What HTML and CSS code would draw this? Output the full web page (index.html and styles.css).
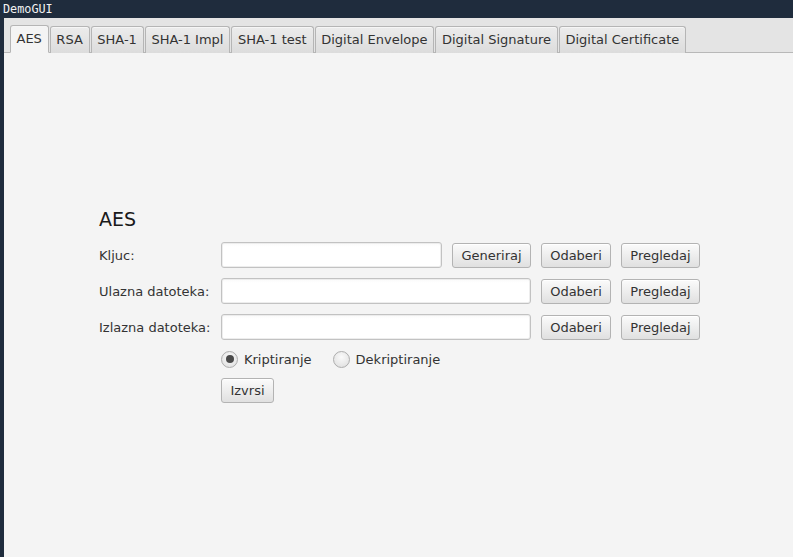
FILE: index.html
```html
<!DOCTYPE html>
<html>
<head>
<meta charset="utf-8">
<title>DemoGUI</title>
<link rel="stylesheet" href="styles.css">
</head>
<body>
<div class="titlebar">DemoGUI</div>
<div class="frame">
  <div class="tabbar">
    <div class="tab selected">AES</div>
    <div class="tab">RSA</div>
    <div class="tab">SHA-1</div>
    <div class="tab">SHA-1 Impl</div>
    <div class="tab">SHA-1 test</div>
    <div class="tab">Digital Envelope</div>
    <div class="tab">Digital Signature</div>
    <div class="tab">Digital Certificate</div>
  </div>
  <div class="content">
    <div class="form">
      <h1 class="heading">AES</h1>
      <div class="grid">
        <label class="label">Kljuc:</label>
        <input class="field short" type="text">
        <button class="btn c3">Generiraj</button>
        <button class="btn c4">Odaberi</button>
        <button class="btn c5">Pregledaj</button>

        <label class="label">Ulazna datoteka:</label>
        <input class="field long" type="text">
        <button class="btn c4">Odaberi</button>
        <button class="btn c5">Pregledaj</button>

        <label class="label">Izlazna datoteka:</label>
        <input class="field long" type="text">
        <button class="btn c4">Odaberi</button>
        <button class="btn c5">Pregledaj</button>
      </div>
      <div class="radios">
        <div class="radio"><span class="dot on"></span>Kriptiranje</div>
        <div class="radio"><span class="dot"></span>Dekriptiranje</div>
      </div>
      <div class="run">
        <button class="btn">Izvrsi</button>
      </div>
    </div>
  </div>
</div>
</body>
</html>
```

FILE: styles.css
```css
* { box-sizing: border-box; }
html, body { margin: 0; padding: 0; }
body {
  width: 793px;
  height: 557px;
  background: #1f2c3d;
  overflow: hidden;
  font-family: "DejaVu Sans", "Liberation Sans", sans-serif;
  font-size: 13px;
  color: #333333;
  display: flex;
  flex-direction: column;
}
.titlebar {
  height: 18px;
  line-height: 18px;
  padding-left: 3px;
  color: #f2f2f2;
  font-family: "DejaVu Sans Mono", monospace;
  font-size: 11.8px;
  flex: none;
}
.frame {
  flex: 1;
  margin-left: 4px;
  display: flex;
  flex-direction: column;
  background: #f4f4f4;
}
.tabbar {
  height: 35px;
  flex: none;
  background: #e4e4e4;
  border-bottom: 1px solid #b8b8b8;
  display: flex;
  align-items: flex-end;
  padding-left: 6px;
  gap: 1px;
}
.tab {
  height: 27px;
  margin-bottom: -1px;
  padding: 0 6px 0 5.5px;
  border: 1px solid #b5b5b5;
  border-bottom: none;
  border-radius: 3px 3px 0 0;
  background: linear-gradient(#ececec, #dcdcdc);
  box-shadow: inset 0 1px 0 #f6f6f6;
  line-height: 26px;
  color: #333333;
  white-space: nowrap;
}
.tab.selected {
  background: #f4f4f4;
  height: 28px;
  border-bottom: 1px solid #f4f4f4;
}
.content {
  flex: 1;
  padding: 154px 0 0 95px;
}
.heading {
  margin: 0 0 11px 0;
  font-size: 19px;
  font-weight: normal;
  line-height: 24px;
  color: #1a1a1a;
}
.grid {
  display: grid;
  grid-template-columns: 122px 231px 89px 80px 79px;
  grid-auto-rows: 26px;
  row-gap: 10px;
  align-items: center;
}
.label {
  grid-column: 1;
  color: #333333;
}
.field {
  height: 26px;
  border: 1px solid #c2c2c2;
  border-radius: 3px;
  background: linear-gradient(#f9f9f9, #ffffff 4px);
  box-shadow: inset 0 0 0 1px #ededed;
  margin: 0;
  padding: 0 6px;
  font: inherit;
}
.field.short { grid-column: 2; width: 221px; }
.field.long { grid-column: 2 / span 2; width: 310px; }
.btn {
  height: 25px;
  border: 1px solid #b3b3b3;
  border-radius: 3px;
  background: linear-gradient(#fbfbfb, #e0e0e0);
  box-shadow: inset 0 1px 0 #ffffff;
  font: inherit;
  color: #333333;
  padding: 0 8px;
  margin: 0;
  justify-self: start;
}
.c3 { grid-column: 3; width: 79px; }
.c4 { grid-column: 4; width: 70px; }
.c5 { grid-column: 5; width: 79px; }
.radios {
  margin: 10px 0 0 122px;
  height: 18px;
  display: flex;
  align-items: center;
  gap: 21px;
}
.radio {
  display: flex;
  align-items: center;
  gap: 6px;
  color: #333333;
}
.dot {
  width: 17px;
  height: 17px;
  border-radius: 50%;
  border: 1px solid #adadad;
  background: radial-gradient(circle at 50% 35%, #fafafa, #dcdcdc);
  display: flex;
  align-items: center;
  justify-content: center;
}
.dot.on::after {
  content: "";
  width: 8px;
  height: 8px;
  border-radius: 50%;
  background: #4a4a4a;
}
.run {
  margin: 10px 0 0 122px;
}
.run .btn { height: 25px; width: 53px; }
```
